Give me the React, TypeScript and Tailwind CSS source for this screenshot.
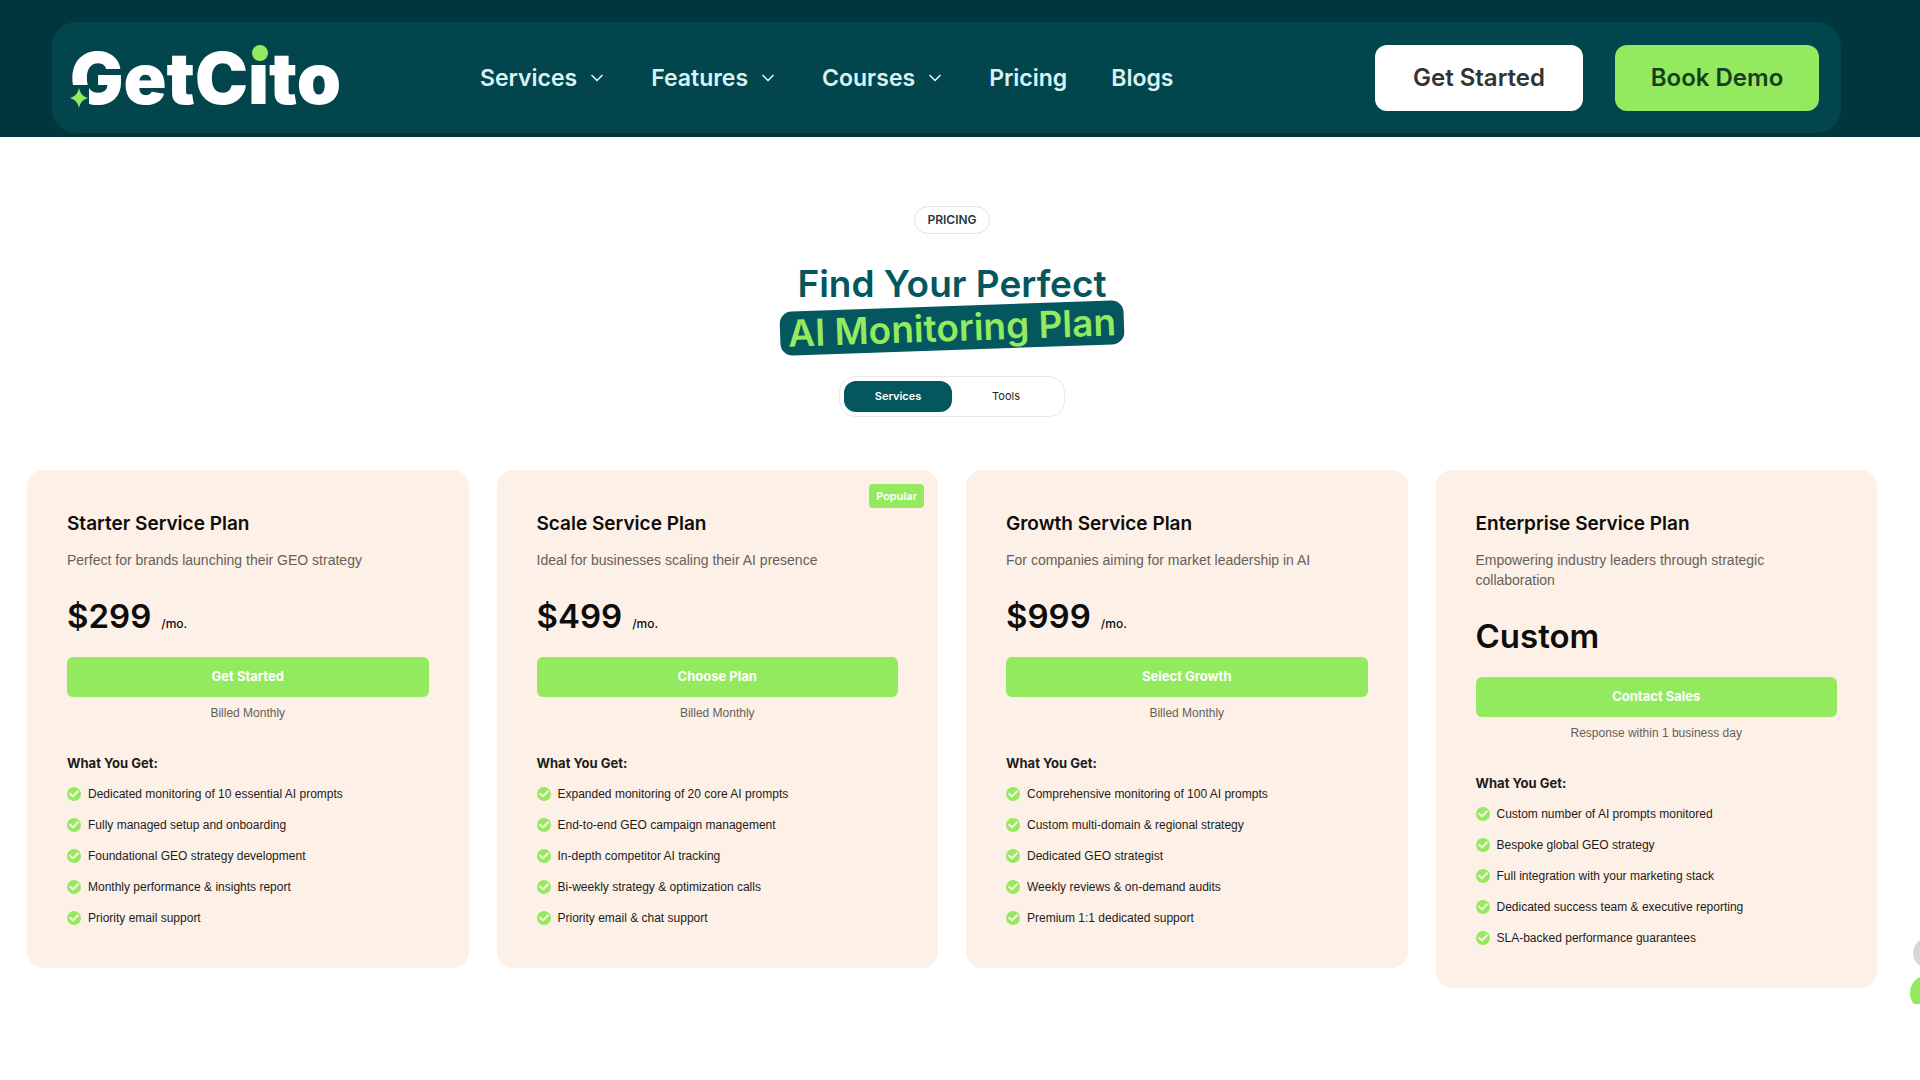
import { useState } from "react";
import { FiChevronDown } from "react-icons/fi";

interface Plan {
  name: string;
  description: string;
  price: string;
  period?: string;
  cta: string;
  note: string;
  popular?: boolean;
  features: string[];
}

const navItems = [
  { label: "Services", hasMenu: true },
  { label: "Features", hasMenu: true },
  { label: "Courses", hasMenu: true },
  { label: "Pricing", hasMenu: false },
  { label: "Blogs", hasMenu: false },
];

const plans: Plan[] = [
  {
    name: "Starter Service Plan",
    description: "Perfect for brands launching their GEO strategy",
    price: "$299",
    period: "/mo.",
    cta: "Get Started",
    note: "Billed Monthly",
    features: [
      "Dedicated monitoring of 10 essential AI prompts",
      "Fully managed setup and onboarding",
      "Foundational GEO strategy development",
      "Monthly performance & insights report",
      "Priority email support",
    ],
  },
  {
    name: "Scale Service Plan",
    description: "Ideal for businesses scaling their AI presence",
    price: "$499",
    period: "/mo.",
    cta: "Choose Plan",
    note: "Billed Monthly",
    popular: true,
    features: [
      "Expanded monitoring of 20 core AI prompts",
      "End-to-end GEO campaign management",
      "In-depth competitor AI tracking",
      "Bi-weekly strategy & optimization calls",
      "Priority email & chat support",
    ],
  },
  {
    name: "Growth Service Plan",
    description: "For companies aiming for market leadership in AI",
    price: "$999",
    period: "/mo.",
    cta: "Select Growth",
    note: "Billed Monthly",
    features: [
      "Comprehensive monitoring of 100 AI prompts",
      "Custom multi-domain & regional strategy",
      "Dedicated GEO strategist",
      "Weekly reviews & on-demand audits",
      "Premium 1:1 dedicated support",
    ],
  },
  {
    name: "Enterprise Service Plan",
    description: "Empowering industry leaders through strategic collaboration",
    price: "Custom",
    cta: "Contact Sales",
    note: "Response within 1 business day",
    features: [
      "Custom number of AI prompts monitored",
      "Bespoke global GEO strategy",
      "Full integration with your marketing stack",
      "Dedicated success team & executive reporting",
      "SLA-backed performance guarantees",
    ],
  },
];

function Logo() {
  return (
    <a href="#" className="relative block w-[272px] shrink-0 text-[71px] leading-[72px] font-black text-white">
      GetCito
      {/* Sparkle under the "G" and the green dot of the "i" */}
      <svg viewBox="0 0 272 72" className="absolute inset-0 h-[72px] w-[272px]" aria-hidden="true">
        <rect x="0" y="43" width="19" height="22" fill="#02454c" />
        <path d="M9 46c1.500 6 3.500 8 9 10c-5.500 2-7.500 4-9 10c-1.500-6-3.500-8-9-10c5.500-2 7.500-4 9-10Z" fill="#93ea5f" />
        <rect x="180" y="1" width="21" height="21" fill="#02454c" />
        <circle cx="190" cy="11" r="8" fill="#93ea5f" />
      </svg>
    </a>
  );
}

function CheckIcon() {
  return (
    <svg viewBox="0 0 14 14" className="size-[14px] shrink-0" aria-hidden="true">
      <circle cx="7" cy="7" r="7" fill="#93ea5f" />
      <path d="M2.500 6.300 6 9.300 11.600 3.800" fill="none" stroke="#fdf0e6" strokeWidth="2" />
    </svg>
  );
}

function Header() {
  return (
    <header className="bg-[#01363c] pt-[22px] pr-[79px] pb-1 pl-[52px]">
      <div className="flex h-[111px] items-center rounded-3xl bg-[#02454c] pr-[22px] pl-[18px]">
        <Logo />
        <nav className="ml-[138px] flex items-center gap-11 text-[23px] leading-8 font-semibold text-[#d9f3f3]">
          {navItems.map((item) => (
            <a key={item.label} href="#" className="flex items-center gap-[10px]">
              {item.label}
              {item.hasMenu && <FiChevronDown className="size-5" />}
            </a>
          ))}
        </nav>
        <div className="ml-auto flex gap-8 text-2xl font-semibold">
          <button className="h-[66px] w-[208px] rounded-xl bg-white text-[#333333]">Get Started</button>
          <button className="h-[66px] w-[204px] rounded-xl bg-[#93ea5f] text-[#173f1f]">Book Demo</button>
        </div>
      </div>
    </header>
  );
}

function PlanCard({ plan }: { plan: Plan }) {
  return (
    <article className="relative rounded-2xl bg-[#fdf0e6] px-10 pt-10 pb-[42px]">
      {plan.popular && (
        <span className="absolute top-[14px] right-[14px] rounded-sm bg-[#93ea5f] px-[7px] py-1 text-[11px] leading-4 font-semibold text-white">
          Popular
        </span>
      )}
      <h2 className="text-[19px] leading-7 font-semibold text-[#0d0d0d]">{plan.name}</h2>
      <p className="mt-3 font-['Liberation_Sans',sans-serif] text-sm leading-5 text-[#666059]">
        {plan.description}
      </p>
      <p className="mt-6 flex items-baseline gap-[10px] leading-[44px] text-[#0d0d0d]">
        <span className="text-[33px] font-semibold">{plan.price}</span>
        {plan.period && <span className="text-xs font-medium">{plan.period}</span>}
      </p>
      <button className="mt-[19px] h-10 w-full rounded-md bg-[#93ea5f] text-[13px] font-bold text-white">
        {plan.cta}
      </button>
      <p className="mt-2 text-center font-['Liberation_Sans',sans-serif] text-xs leading-4 text-[#666059]">
        {plan.note}
      </p>
      <h3 className="mt-8 text-[13px] leading-5 font-bold text-[#1c1c1c]">What You Get:</h3>
      <ul className="mt-[13px] flex flex-col gap-[15px] font-['Liberation_Sans',sans-serif]">
        {plan.features.map((feature) => (
          <li key={feature} className="flex items-center gap-[7px] text-xs leading-4 text-[#1c1c1c]">
            <CheckIcon />
            {feature}
          </li>
        ))}
      </ul>
    </article>
  );
}

export default function App() {
  const [activeTab, setActiveTab] = useState<"services" | "tools">("services");

  return (
    <div className="min-h-screen overflow-x-hidden bg-white font-[Inter,sans-serif]">
      <Header />

      <main className="pr-[43px] pl-[27px]">
        <section className="flex flex-col items-center pt-[69px]">
          <span className="rounded-full border border-[#dbe6e7] px-3 py-[5px] text-xs leading-4 font-semibold text-[#1d3a3e]">
            PRICING
          </span>
          <h1 className="mt-7 flex flex-col items-center text-[37px] leading-[44px] font-semibold text-[#04575f]">
            <span>Find Your Perfect</span>
            <span className="-rotate-2 rounded-xl bg-[#04575f] px-2 text-[#93ea5f]">
              AI Monitoring Plan
            </span>
          </h1>

          <div className="mt-[26px] flex rounded-2xl border border-[#e6eaeb] p-1 text-[11px]">
            <button
              onClick={() => setActiveTab("services")}
              className={`h-[31px] w-[108px] rounded-xl ${
                activeTab === "services" ? "bg-[#04575f] font-semibold text-white" : "text-[#222222]"
              }`}
            >
              Services
            </button>
            <button
              onClick={() => setActiveTab("tools")}
              className={`h-[31px] w-[108px] rounded-xl ${
                activeTab === "tools" ? "bg-[#04575f] font-semibold text-white" : "text-[#222222]"
              }`}
            >
              Tools
            </button>
          </div>
        </section>

        <section className="mt-[53px] grid grid-cols-4 items-start gap-7">
          {plans.map((plan) => (
            <PlanCard key={plan.name} plan={plan} />
          ))}
        </section>
      </main>

      {/* Floating buttons that peek in from the right edge */}
      <div className="fixed top-[938px] -right-[26px] flex h-[66px] flex-col items-center gap-[7px] overflow-hidden">
        <button aria-label="Scroll to top" className="size-[30px] shrink-0 rounded-full bg-[#d6d6d6]" />
        <button aria-label="Open chat" className="size-9 shrink-0 rounded-full bg-[#93ea5f]" />
      </div>
    </div>
  );
}
